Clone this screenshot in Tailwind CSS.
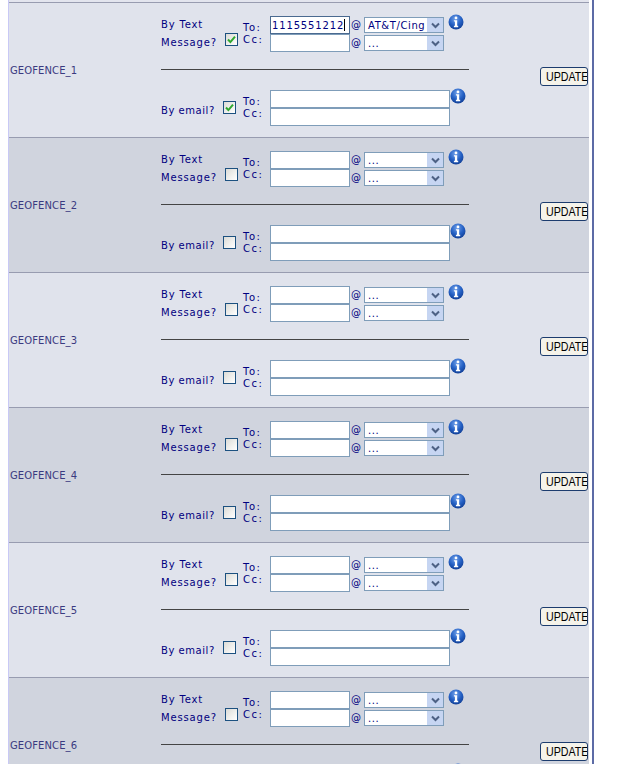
<!DOCTYPE html>
<html>
<head>
<meta charset="utf-8">
<script src="https://cdn.jsdelivr.net/npm/@tailwindcss/browser@4"></script>
</head>
<body class="bg-white overflow-hidden">
<div class="flex h-[764px] overflow-hidden pl-[8px] font-['DejaVu_Sans','Liberation_Sans',sans-serif]">
    <!-- geofence table -->
    <div class="w-[581px] shrink-0 border-l border-[#c9c9f5]">
        <div class="h-[3px] bg-[#e3e5ee] border-b border-[#989cb0]"></div>
        <div id="rows"></div>
    </div>
    <div class="ml-[3px] w-[2px] shrink-0 bg-[#5c6ba6]"></div>
</div>

<svg width="0" height="0" class="absolute">
    <defs>
        <radialGradient id="infoFill" cx="45%" cy="30%" r="75%">
            <stop offset="0%" stop-color="#6f9fe8"/>
            <stop offset="55%" stop-color="#2460c4"/>
            <stop offset="100%" stop-color="#0f3a8e"/>
        </radialGradient>
    </defs>
</svg>

<script>
const infoIcon = `
    <svg width="16" height="16" viewBox="0 0 16 16" class="block">
        <circle cx="8" cy="8" r="7.5" fill="url(#infoFill)"/>
        <circle cx="8" cy="3.9" r="1.4" fill="#fff"/>
        <path d="M5.9 6.2h3.3v5.6h1v1.4H5.9v-1.4h1V7.6h-1z" fill="#fff"/>
    </svg>`;

function checkbox(checked) {
    const tick = checked
        ? '<svg width="11" height="11" viewBox="0 0 11 11" class="block"><path d="M2 5.5l2.4 2.6L9 2.6" fill="none" stroke="#2fa82f" stroke-width="2"/></svg>'
        : '';
    return `<div class="w-[13px] h-[13px] border border-[#1c5180] bg-gradient-to-br from-[#dcdcd7] to-white">${tick}</div>`;
}

function textInput(width, value = '', caret = false) {
    return `<div class="relative h-[18px] ${width}">
        <input type="text" value="${value}" class="block w-full h-full bg-white border ${caret ? 'border-[#4a6a90]' : 'border-[#7f9db9]'} px-px text-[10px] tracking-[0.85px] text-[#000080] outline-none font-['DejaVu_Sans',sans-serif]">
        ${caret ? '<span class="absolute left-[74px] top-[3px] w-px h-[12px] bg-black"></span>' : ''}
    </div>`;
}

function carrier(label) {
    return `<div class="flex items-center w-[80px] h-[16px] mb-[2px] bg-white border border-[#7f9db9] pl-[3px] text-[10px] tracking-[0.6px] text-[#000080] overflow-hidden">
        <span class="flex-1 whitespace-nowrap">${label}</span>
        <span class="flex items-center justify-center w-[16px] h-[14px] shrink-0 bg-[#c6d5f2]">
            <svg width="9" height="7" viewBox="0 0 9 7" class="block"><path d="M1 1.5l3.5 3.5L8 1.5" fill="none" stroke="#4d6185" stroke-width="2"/></svg>
        </span>
    </div>`;
}

function toCc() {
    return `<div class="text-[10px] leading-[12px] tracking-[1.5px] text-[#000080]"><div>To:</div><div>Cc:</div></div>`;
}

function renderRow(row, index) {
    const bg = index % 2 === 0 ? 'bg-[#e0e3ec]' : 'bg-[#d0d4de]';
    return `
    <div class="flex h-[135px] border-b border-[#989cb0] ${bg} text-[#000080]">
        <div class="w-[152px] shrink-0 flex items-center pl-px text-[10px] tracking-[0.1px] text-[#3a3a80]">${row.name}</div>
        <div class="w-[308px] shrink-0">
            <!-- text message -->
            <div class="flex h-[67px] pt-[12px] border-b border-[#444444]">
                <div class="w-[64px] shrink-0 mt-px text-[10px] leading-[18px] tracking-[0.85px] whitespace-nowrap">By Text<br>Message?</div>
                <div class="mt-[18px]">${checkbox(row.sms)}</div>
                <div class="w-[27px] ml-[5px] mt-[7px]">${toCc()}</div>
                <div class="mt-px">${textInput('w-[80px]', row.phone, row.sms)}${textInput('w-[80px]')}</div>
                <div class="w-[14px] pl-px mt-px text-[10px] leading-[18px]"><div>@</div><div>@</div></div>
                <div class="mt-[2px]">${carrier(row.carrier)}${carrier('...')}</div>
                <div class="ml-[4px] -mt-[1px]">${infoIcon}</div>
            </div>
            <!-- email -->
            <div class="flex pt-[18px]">
                <div class="w-[62px] shrink-0 mt-[14px] text-[10px] leading-[18px] tracking-[0.55px] whitespace-nowrap">By email?</div>
                <div class="mt-[13px]">${checkbox(row.email)}</div>
                <div class="w-[34px] pl-[7px] mt-[8px]">${toCc()}</div>
                <div class="mt-[2px]">${textInput('w-[180px]')}${textInput('w-[180px]')}</div>
                <div>${infoIcon}</div>
            </div>
        </div>
        <div class="flex-1 flex items-start justify-end pr-px">
            <div class="mt-[64px] w-[48px] h-[19px] overflow-hidden rounded-[3px] border border-[#1c3c6e] bg-[#f5f3ea] pl-[5px] text-[13px] leading-[18px] text-black font-['Liberation_Sans',sans-serif]"><span class="block origin-left scale-x-[0.82] whitespace-nowrap">UPDATE</span></div>
        </div>
    </div>`;
}

const rows = [
    { name: 'GEOFENCE_1', sms: true, email: true, phone: '1115551212', carrier: 'AT&amp;T/Cing' },
    { name: 'GEOFENCE_2', carrier: '...' },
    { name: 'GEOFENCE_3', carrier: '...' },
    { name: 'GEOFENCE_4', carrier: '...' },
    { name: 'GEOFENCE_5', carrier: '...' },
    { name: 'GEOFENCE_6', carrier: '...' }
];

document.getElementById('rows').innerHTML = rows.map(renderRow).join('');
</script>
</body>
</html>
